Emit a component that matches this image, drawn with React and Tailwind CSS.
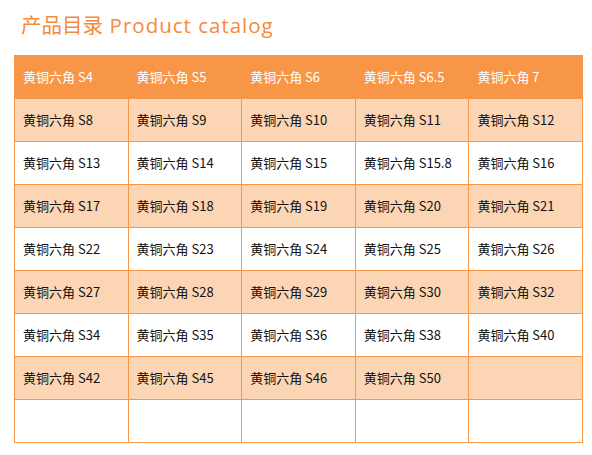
const rows = [
  ["S8", "S9", "S10", "S11", "S12"],
  ["S13", "S14", "S15", "S15.8", "S16"],
  ["S17", "S18", "S19", "S20", "S21"],
  ["S22", "S23", "S24", "S25", "S26"],
  ["S27", "S28", "S29", "S30", "S32"],
  ["S34", "S35", "S36", "S38", "S40"],
  ["S42", "S45", "S46", "S50", ""],
  ["", "", "", "", ""],
];

const header = ["S4", "S5", "S6", "S6.5", "7"];

export default function App() {
  return (
    <div
      className="w-[592px] h-[455px] bg-white pt-[9px] pl-[14px]"
      style={{ fontFamily: '"Noto Sans CJK SC", "Noto Sans", sans-serif' }}
    >
      <h1 className="h-[30px] text-[20.5px] leading-[30px] text-[#f58a3c] pl-[7px] mb-[16px] font-normal">
        产品目录{" "}
        <span
          className="tracking-[1px] ml-[2px]"
          style={{ fontFamily: '"Open Sans", sans-serif' }}
        >
          Product catalog
        </span>
      </h1>
      <table className="w-[569px] border-collapse table-fixed text-[13px]">
        <thead>
          <tr className="bg-[#f79646] h-[43px]">
            {header.map((h, i) => (
              <th
                key={i}
                className="text-left font-normal text-white pl-[8px] border-x border-[#f79646]"
              >
                黄铜六角 {h}
              </th>
            ))}
          </tr>
        </thead>
        <tbody>
          {rows.map((r, ri) => (
            <tr
              key={ri}
              className={`h-[43px] ${ri % 2 === 0 ? "bg-[#fcd5b4]" : "bg-white"}`}
            >
              {r.map((c, ci) => (
                <td
                  key={ci}
                  className="border border-[#f79646] pl-[8px] text-[#111111]"
                >
                  {c ? `黄铜六角 ${c}` : ""}
                </td>
              ))}
            </tr>
          ))}
        </tbody>
      </table>
    </div>
  );
}
